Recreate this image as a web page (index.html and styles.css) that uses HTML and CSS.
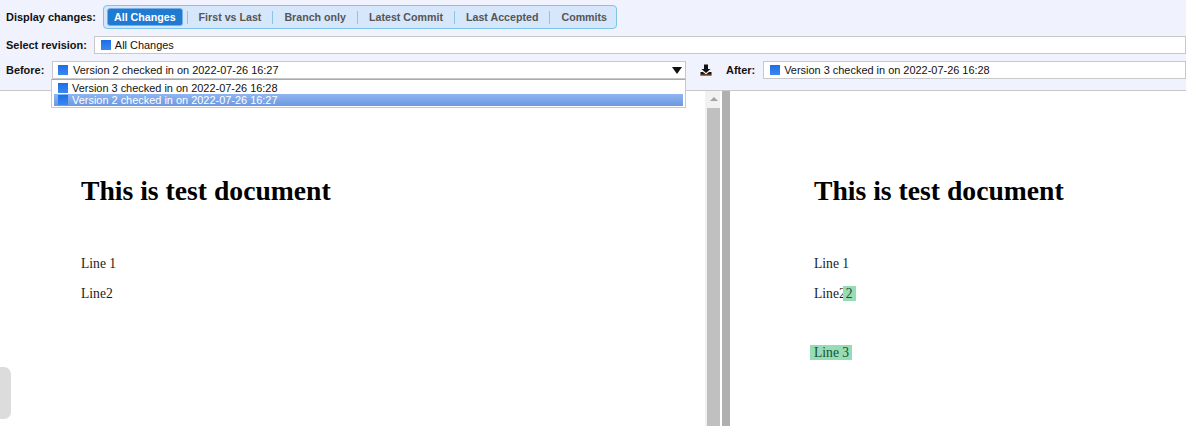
FILE: index.html
```html
<!DOCTYPE html>
<html lang="en">
<head>
  <meta charset="UTF-8" />
  <title>Compare revisions</title>
  <link rel="stylesheet" href="styles.css">
</head>
<body>

  <div class="toolbar">
    <div class="row row-changes">
      <span class="label">Display changes:</span>
      <div class="pills">
        <span class="pill active">All Changes</span>
        <span class="pill">First vs Last</span>
        <span class="pill">Branch only</span>
        <span class="pill">Latest Commit</span>
        <span class="pill">Last Accepted</span>
        <span class="pill">Commits</span>
      </div>
    </div>
    <div class="row row-revision">
      <span class="label">Select revision:</span>
      <div class="field grow"><span class="swatch"></span>All Changes</div>
    </div>
    <div class="row row-compare">
      <span class="label label-before">Before:</span>
      <div class="combo">
        <div class="field field-before"><span class="swatch"></span>Version 2 checked in on 2022-07-26 16:27<span class="arrow"></span></div>
        <div class="dropdown">
          <div class="option"><span class="swatch"></span>Version 3 checked in on 2022-07-26 16:28</div>
          <div class="option selected"><span class="swatch"></span>Version 2 checked in on 2022-07-26 16:27</div>
        </div>
      </div>
      <svg class="download" width="12" height="12" viewBox="0 0 12 12">
        <path d="M4 0.5h4v4.500h2.500L6 9 1.500 5H4z" fill="#111"/>
        <path d="M0.500 8h2.500l3 2.500L9 8h2.500v3.500h-11z" fill="#111"/>
        <rect x="0.500" y="10.500" width="11" height="1" fill="#a8661c"/>
      </svg>
      <span class="label label-after">After:</span>
      <div class="field grow"><span class="swatch"></span>Version 3 checked in on 2022-07-26 16:28</div>
    </div>
  </div>

  <div class="panes">
    <div class="pane pane-left">
      <h1>This is test document</h1>
      <p>Line 1</p>
      <p>Line2</p>
    </div>
    <div class="scrollbar">
      <div class="scroll-btn"></div>
      <div class="scroll-thumb"></div>
    </div>
    <div class="splitter"></div>
    <div class="pane pane-right">
      <h1>This is test document</h1>
      <p>Line 1</p>
      <p>Line2<span class="added">2</span></p>
      <p class="added-line"><span class="added">Line 3</span></p>
    </div>
  </div>

  <div class="side-handle"></div>

</body>
</html>
```

FILE: styles.css
```css
html, body {
  margin: 0;
  height: 100%;
  overflow: hidden;
}
body {
  font-family: 'Liberation Sans', Arial, sans-serif;
  font-size: 10.95px;
  color: #111;
  background-color: #fff;
}

/* top toolbar */
.toolbar {
  height: 90px;
  padding-left: 6px;
  background-color: #f0f3fe;
  border-bottom: 1px solid #c8c8cc;
}
.row {
  display: flex;
  align-items: center;
}
.row-changes {
  height: 24px;
  padding-top: 5px;
}
.row-revision {
  margin-top: 7px;
  height: 18px;
}
.row-compare {
  margin-top: 7px;
  height: 18px;
  position: relative;
}
.label {
  font-weight: bold;
  white-space: nowrap;
}
.row-changes .label {
  width: 97px;
  flex: none;
}

/* display changes pills */
.pills {
  display: flex;
  align-items: center;
  height: 24px;
  box-sizing: border-box;
  padding-left: 3px;
  background-color: #d6e6fb;
  border: 1px solid #7cc4ec;
  border-radius: 4px;
}
.pill {
  padding: 0 11px;
  font-size: 10.67px;
  font-weight: bold;
  color: #555;
  border-left: 1px solid #8cc4e6;
  line-height: 13px;
}
.pill:last-child {
  padding-right: 9px;
}
.pill.active {
  padding: 0 6px;
  line-height: 16px;
  color: #fff;
  background-color: #1f7ad2;
  border: 1px solid #7ab0e4;
  border-radius: 3px;
}
.pill.active + .pill {
  margin-left: 4px;
}

/* select boxes */
.field {
  display: flex;
  align-items: center;
  height: 18px;
  box-sizing: border-box;
  padding-left: 6px;
  background-color: #fff;
  border: 1px solid #c8c8cc;
  white-space: nowrap;
}
.grow {
  flex: 1;
}
.row-revision .field {
  margin-left: 7px;
}
.swatch {
  display: inline-block;
  flex: none;
  width: 10px;
  height: 10px;
  margin-right: 4px;
  background: linear-gradient(#1c6fe8, #3b87ee);
}
.label-before {
  width: 46px;
}
.combo {
  position: relative;
  width: 634px;
}
.field-before {
  position: relative;
  padding-left: 5px;
}
.field-before .swatch {
  margin-right: 5px;
}
.arrow {
  position: absolute;
  right: 3px;
  top: 5px;
  border-left: 5px solid transparent;
  border-right: 5px solid transparent;
  border-top: 7px solid #111;
}
.download {
  margin-left: 14px;
  flex: none;
}
.label-after {
  margin-left: 14px;
  margin-right: 8px;
}

.dropdown {
  position: absolute;
  left: -1px;
  top: 18px;
  width: 635px;
  height: 29px;
  box-sizing: border-box;
  padding: 2px 2px 0;
  background-color: #fff;
  border: 1px solid #c8c8cc;
  border-top: 1px solid #aaa;
  z-index: 5;
}
.option {
  display: flex;
  align-items: center;
  height: 12px;
  padding-left: 4px;
  white-space: nowrap;
}
.option.selected {
  color: #fff;
  background: linear-gradient(#8fb6f2, #6d97e0);
}

/* document panes */
.panes {
  display: flex;
  height: 335px;
  font-family: 'Liberation Serif', 'Times New Roman', serif;
  color: #000;
}
.pane {
  overflow: hidden;
  box-sizing: border-box;
}
.pane-left {
  width: 705px;
  padding-left: 81px;
}
.pane-right {
  flex: 1;
  padding-left: 84px;
}
.pane h1 {
  margin: 84px 0 0;
  font-size: 27.66px;
  line-height: 31px;
}
.pane p {
  margin: 50px 0 0;
  font-size: 13.6px;
  line-height: 16px;
  color: #1a1a1a;
}
.pane h1 + p ~ p {
  margin-top: 14px;
}
.pane p.added-line {
  margin-top: 43px;
}
.added {
  display: inline-block;
  line-height: 15px;
  margin: 0 -3px;
  padding: 0 3px;
  color: #1b4d35;
  background-color: #96dcb4;
}
.added-line .added {
  margin: 0 0 0 -4px;
  padding: 0 3px 0 4px;
}
.scrollbar {
  width: 15px;
  flex: none;
  box-sizing: border-box;
  padding: 0 0 0 2px;
  background-color: #f1f1f1;
}
.scroll-btn {
  height: 17px;
  position: relative;
}
.scroll-btn::before {
  content: "";
  position: absolute;
  left: 3px;
  top: 6px;
  border-left: 4px solid transparent;
  border-right: 4px solid transparent;
  border-bottom: 4px solid #a3a3a3;
}
.scroll-thumb {
  height: 318px;
  background-color: #c0c0c0;
}
.splitter {
  width: 8px;
  margin-left: 2px;
  flex: none;
  background-color: #b0b0b0;
}

/* half hidden handle bottom left */
.side-handle {
  position: absolute;
  left: -6px;
  top: 367px;
  width: 17px;
  height: 52px;
  border-radius: 7px;
  background-color: #dcdcdc;
}
```
